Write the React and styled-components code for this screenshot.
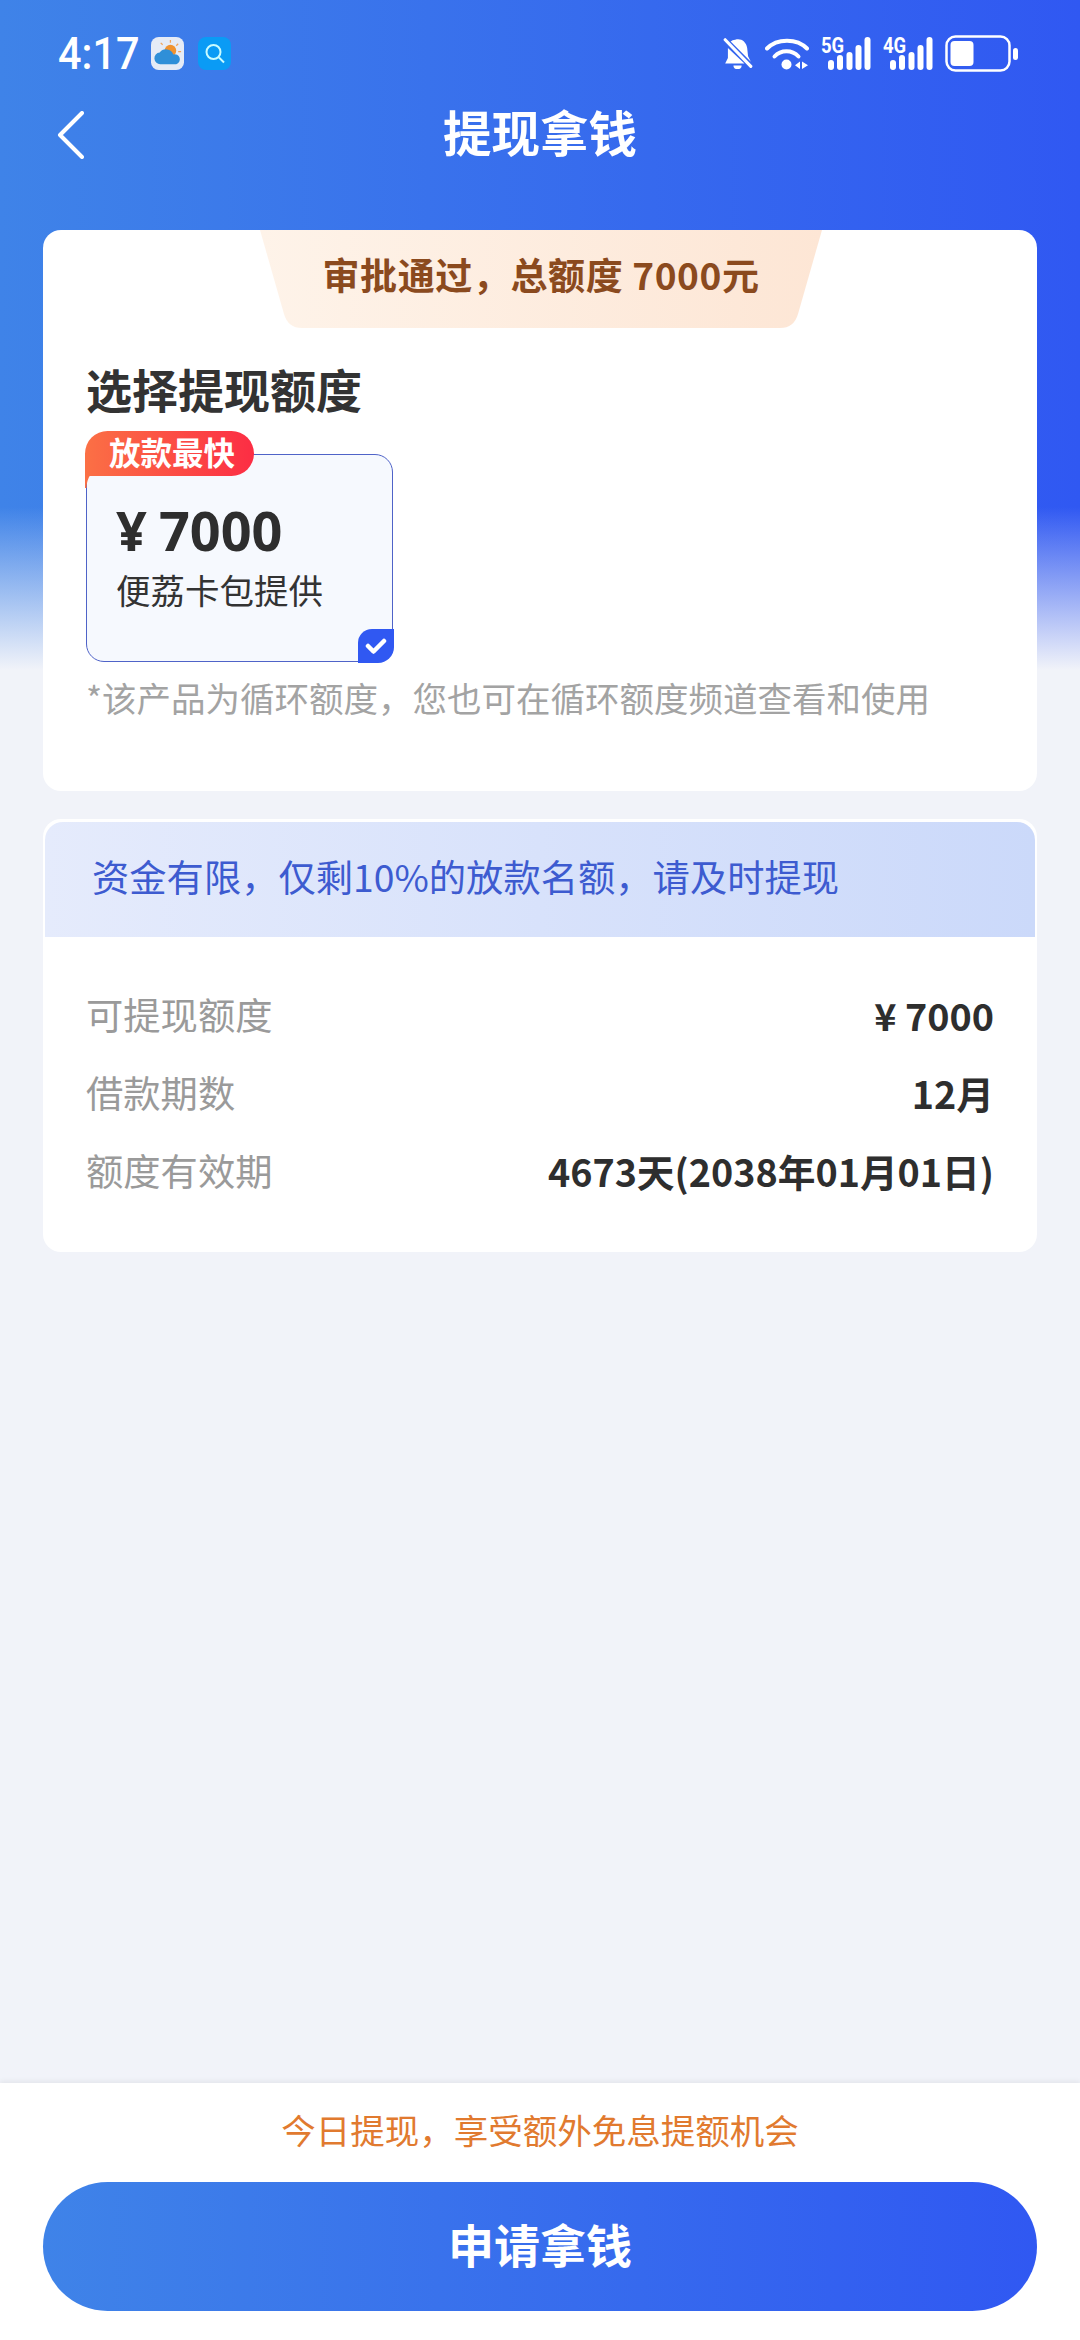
import React from "react";
import styled, { createGlobalStyle } from "styled-components";

const Global = createGlobalStyle`
  html, body { margin: 0; padding: 0; background: #f1f3f9; }
  * { box-sizing: border-box; }
  body { font-family: "Noto Sans CJK SC", "Noto Sans", sans-serif; }
`;

const Page = styled.div`
  position: relative;
  width: 1080px;
  height: 2340px;
  display: flex;
  flex-direction: column;
  overflow: hidden;
  background: #f1f3f9;
`;

const Hero = styled.div`
  position: absolute;
  inset: 0 0 auto 0;
  height: 670px;
  background: linear-gradient(90deg, #3f83e8 0%, #3058f2 100%);
  &::after {
    content: "";
    position: absolute;
    inset: 0;
    background: linear-gradient(180deg, rgba(241,243,249,0) 0, rgba(241,243,249,0) 507px, rgba(241,243,249,1) 670px);
  }
`;

const StatusBar = styled.div`
  position: relative;
  z-index: 1;
  height: 100px;
  padding: 6px 62px 0 58px;
  display: flex;
  justify-content: space-between;
  align-items: center;
`;

const LeftStatus = styled.div`
  display: flex;
  align-items: center;
  gap: 14px;
`;

const RightStatus = styled.div`
  display: flex;
  align-items: center;
  gap: 12px;
`;

const Clock = styled.span`
  display: inline-block;
  width: 79px;
  font: 500 45px/33px "Roboto", sans-serif;
  color: #fff;
  white-space: nowrap;
  transform: scaleX(0.92);
  transform-origin: left center;
`;

const NavBar = styled.div`
  position: relative;
  z-index: 1;
  height: 70px;
  padding-left: 57px;
  display: flex;
  align-items: center;
`;

const NavTitle = styled.div`
  position: absolute;
  left: 0;
  right: 0;
  top: 0;
  text-align: center;
  color: #fff;
  font-size: 48.5px;
  font-weight: 700;
  line-height: 63px;
`;

const Content = styled.div`
  position: relative;
  z-index: 1;
  padding: 60px 43px 0;
  display: flex;
  flex-direction: column;
  gap: 28px;
`;

const QuotaCard = styled.section`
  height: 561px;
  background: #fff;
  border-radius: 18px;
  padding: 0 43px;
  display: flex;
  flex-direction: column;
`;

const Ribbon = styled.div`
  align-self: center;
  width: 562px;
  height: 98px;
  margin-left: 2px;
  position: relative;
  display: flex;
  align-items: center;
  justify-content: center;
  color: #8b4a1e;
  font-size: 37px;
  font-weight: 700;
  letter-spacing: 0.6px;
  padding-bottom: 11px;
`;

const RibbonShape = styled.svg`
  position: absolute;
  inset: 0;
  width: 100%;
  height: 100%;
`;

const RibbonText = styled.span`
  position: relative;
`;

const Heading = styled.h2`
  margin: 28px 0 0;
  font-size: 46px;
  font-weight: 700;
  line-height: 64px;
  color: #333;
`;

const Option = styled.div`
  position: relative;
  width: 307px;
  height: 208px;
  margin-top: 34px;
  flex: none;
  padding: 42px 0 0 29px;
  background: #f6f9fe;
  border: 1.5px solid #4f63c8;
  border-radius: 18px;
`;

const Amount = styled.div`
  font: 700 54px/66px "Noto Sans", sans-serif;
  color: #2e2e2e;
  display: flex;
  align-items: baseline;
  gap: 12px;
`;

const Provider = styled.div`
  font-size: 34.5px;
  line-height: 44px;
  margin-top: 4px;
  color: #333;
  white-space: nowrap;
`;

const Tag = styled.div`
  position: absolute;
  left: -2px;
  top: -24px;
  width: 169px;
  height: 45px;
  border-radius: 23px 23px 23px 0;
  background: linear-gradient(90deg, #fb7045 0%, #fc2d44 100%);
  color: #fff;
  font-size: 31.5px;
  font-weight: 700;
  line-height: 40px;
  padding-left: 24px;
  &::after {
    content: "";
    position: absolute;
    left: 0;
    top: 44px;
    width: 26px;
    height: 13px;
    background: radial-gradient(circle at 100% 100%, transparent 24px, #fb7045 25px);
  }
`;

const CheckCorner = styled.div`
  position: absolute;
  right: -1.5px;
  bottom: -1.5px;
  width: 36px;
  height: 34px;
  background: #3058f2;
  border-radius: 14px 0 16px 0;
  display: flex;
  align-items: center;
  justify-content: center;
`;

const Note = styled.p`
  margin: 12px 0 0;
  font-size: 34.5px;
  line-height: 46px;
  color: #a3a3a3;
  white-space: nowrap;
`;

const DetailCard = styled.section`
  height: 433px;
  background: #fff;
  border-radius: 18px;
  padding: 3px 2px;
  display: flex;
  flex-direction: column;
`;

const Notice = styled.div`
  height: 115px;
  flex: none;
  padding: 0 47px 7px;
  border-radius: 18px 18px 0 0;
  background: linear-gradient(90deg, #e5ebfc 0%, #cbd9fa 100%);
  color: #3d5bd0;
  font-size: 37.3px;
  display: flex;
  align-items: center;
`;

const Rows = styled.div`
  padding: 51px 41px 0;
  display: flex;
  flex-direction: column;
  gap: 26px;
`;

const Row = styled.div`
  display: flex;
  justify-content: space-between;
  align-items: center;
  height: 52px;
`;

const RowLabel = styled.span`
  font-size: 37.3px;
  color: #9a9a9a;
`;

const RowValue = styled.span`
  font-size: 37.7px;
  font-weight: 700;
  color: #2e2e2e;
`;

const Footer = styled.footer`
  position: absolute;
  left: 0;
  right: 0;
  bottom: 0;
  z-index: 2;
  height: 257px;
  background: #fff;
  box-shadow: 0 -2px 5px rgba(0, 0, 0, 0.06);
  display: flex;
  flex-direction: column;
  align-items: center;
  padding: 22px 43px 0;
`;

const Promo = styled.div`
  font-size: 34.5px;
  line-height: 48px;
  color: #e17a2f;
`;

const Cta = styled.button`
  width: 100%;
  height: 129px;
  margin-top: 29px;
  padding: 0 0 8px;
  border: 0;
  border-radius: 65px;
  background: linear-gradient(90deg, #3f83e8 0%, #3058f2 100%);
  color: #fff;
  font-family: inherit;
  font-size: 46px;
  font-weight: 700;
`;

const SignalBox = styled.div`
  position: relative;
  width: 50px;
  height: 33px;
`;

const SignalLabel = styled.span`
  position: absolute;
  left: 0;
  top: 0;
  font: 700 22.5px/16px "Roboto", sans-serif;
  color: #fff;
  transform: scaleX(0.82);
  transform-origin: left center;
`;

const BackIcon = () => (
  <svg width="27" height="48" viewBox="0 0 27 48" fill="none">
    <path d="M25 2 L3 24 L25 46" stroke="#fff" strokeWidth="4" strokeLinecap="round" strokeLinejoin="round" />
  </svg>
);

const WeatherIcon = () => (
  <svg width="33" height="33" viewBox="0 0 34 34">
    <rect width="34" height="34" rx="8" fill="#e5ebf6" />
    <circle cx="20" cy="14" r="6" fill="#f0922e" />
    <path d="M20 3v3M28 7l-2 2M10 6l2 2M31 15h-3" stroke="#f0a45c" strokeWidth="1.3" />
    <path d="M10 28a6 6 0 0 1-1-12 8 8 0 0 1 14 2 5 5 0 0 1 3 10z" fill="#2f8fd8" />
  </svg>
);

const SearchApp = () => (
  <svg width="33" height="33" viewBox="0 0 33 33">
    <rect width="33" height="33" rx="8" fill="#0a9bf5" />
    <circle cx="15.5" cy="15" r="7" fill="none" stroke="#c8fbff" strokeWidth="2" />
    <path d="M21 20.5l5 5" stroke="#c8fbff" strokeWidth="2" />
  </svg>
);

const BellOff = () => (
  <svg width="30" height="33" viewBox="0 0 32 36">
    <path d="M13 3c6-2 12 2 13 9l1 9 3 6L8 5c1-1 3-2 5-2z" fill="#fff" />
    <path d="M5 12 23 29H2l3-6z" fill="#fff" />
    <path d="M11 31h9a4.5 4 0 0 1-9 0z" fill="#fff" />
    <path d="M2 3l28 29" stroke="#fff" strokeWidth="3.4" strokeLinecap="round" />
  </svg>
);

const Wifi = () => (
  <svg width="44" height="33" viewBox="0 0 44 33" fill="none">
    <path d="M2 11.5C12 1 32 1 42 11.5" stroke="#fff" strokeWidth="4" strokeLinecap="round" />
    <path d="M9.5 19.5C16 12.5 27 12.5 33.5 19.5" stroke="#fff" strokeWidth="4" strokeLinecap="round" />
    <circle cx="21.5" cy="27.5" r="5" fill="#fff" />
    <path d="M35 24.5v7.5l-5-3.7zM37 24.5v7.5l6-3.7z" fill="#fff" />
  </svg>
);

const bars = [
  [7, 23, 10],
  [16, 18, 15],
  [25.5, 15, 18],
  [34.5, 8, 25],
  [43.5, 0, 33],
];

const Signal = ({ label }) => (
  <SignalBox>
    <SignalLabel>{label}</SignalLabel>
    <svg width="50" height="33" viewBox="0 0 50 33">
      {bars.map(([x, y, h]) => (
        <rect key={x} x={x} y={y} width="6" height={h} rx="3" fill="#fff" />
      ))}
    </svg>
  </SignalBox>
);

const Battery = () => (
  <svg width="73" height="37" viewBox="0 0 73 37" fill="none">
    <rect x="1.5" y="1.5" width="63" height="34" rx="9" stroke="#fff" strokeWidth="2.5" />
    <rect x="5.5" y="6" width="23" height="25" rx="4" fill="#fff" />
    <rect x="68" y="13" width="5" height="12" rx="2.5" fill="#fff" />
  </svg>
);

const Check = () => (
  <svg width="22" height="18" viewBox="0 0 22 18" fill="none">
    <path d="M3 9l5.5 5.5L19 4" stroke="#fff" strokeWidth="4.5" strokeLinecap="round" strokeLinejoin="round" />
  </svg>
);

const rows = [
  ["可提现额度", "¥ 7000"],
  ["借款期数", "12月"],
  ["额度有效期", "4673天(2038年01月01日)"],
];

export default function App() {
  return (
    <Page>
      <Global />
      <Hero />
      <StatusBar>
        <LeftStatus>
          <Clock>4:17</Clock>
          <WeatherIcon />
          <SearchApp />
        </LeftStatus>
        <RightStatus>
          <BellOff />
          <Wifi />
          <Signal label="5G" />
          <Signal label="4G" />
          <Battery />
        </RightStatus>
      </StatusBar>
      <NavBar>
        <NavTitle>提现拿钱</NavTitle>
        <BackIcon />
      </NavBar>
      <Content>
        <QuotaCard>
          <Ribbon>
            <RibbonShape viewBox="0 0 562 98" preserveAspectRatio="none">
              <defs>
                <linearGradient id="rib" x1="0" x2="1" y1="0" y2="0">
                  <stop offset="0" stopColor="#fef3e9" />
                  <stop offset="1" stopColor="#fde6d5" />
                </linearGradient>
              </defs>
              <path d="M0 0H562L538 84Q534 98 520 98H42Q28 98 24 84Z" fill="url(#rib)" />
            </RibbonShape>
            <RibbonText>审批通过，总额度 7000元</RibbonText>
          </Ribbon>
          <Heading>选择提现额度</Heading>
          <Option>
            <Tag>放款最快</Tag>
            <Amount>
              <span>¥</span>
              <span>7000</span>
            </Amount>
            <Provider>便荔卡包提供</Provider>
            <CheckCorner>
              <Check />
            </CheckCorner>
          </Option>
          <Note>*该产品为循环额度，您也可在循环额度频道查看和使用</Note>
        </QuotaCard>
        <DetailCard>
          <Notice>资金有限，仅剩10%的放款名额，请及时提现</Notice>
          <Rows>
            {rows.map(([label, value]) => (
              <Row key={label}>
                <RowLabel>{label}</RowLabel>
                <RowValue>{value}</RowValue>
              </Row>
            ))}
          </Rows>
        </DetailCard>
      </Content>
      <Footer>
        <Promo>今日提现，享受额外免息提额机会</Promo>
        <Cta>申请拿钱</Cta>
      </Footer>
    </Page>
  );
}
